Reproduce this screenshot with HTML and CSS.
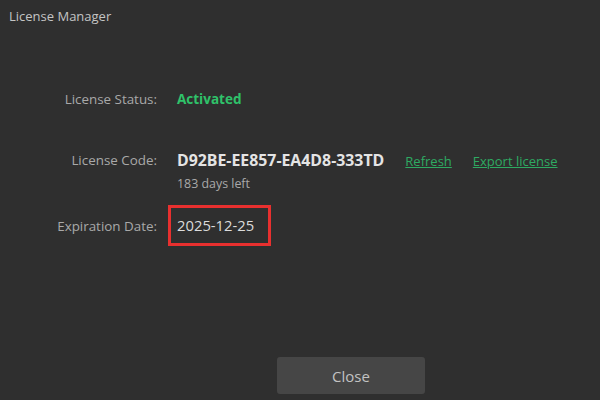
FILE: index.html
```html
<!DOCTYPE html>
<html>
<head>
<meta charset="utf-8">
<link rel="stylesheet" href="styles.css">
</head>
<body>
<div class="window">
  <div class="title">License Manager</div>
  <div class="form">
    <div class="row status-row">
      <div class="label">License Status:</div>
      <div class="value activated">Activated</div>
    </div>
    <div class="row code-row">
      <div class="label">License Code:</div>
      <div class="value">
        <div class="code-line">
          <span class="code">D92BE-EE857-EA4D8-333TD</span>
          <a class="link" href="#">Refresh</a>
          <a class="link" href="#">Export license</a>
        </div>
        <div class="days">183 days left</div>
      </div>
    </div>
    <div class="row exp-row">
      <div class="label">Expiration Date:</div>
      <div class="value"><span class="date-box">2025-12-25</span></div>
    </div>
  </div>
  <div class="footer">
    <button class="close-btn">Close</button>
  </div>
</div>
</body>
</html>
```
FILE: styles.css
```css
html, body {
  margin: 0;
  padding: 0;
  background: #2f2f2f;
}
.window {
  width: 600px;
  height: 400px;
  display: flex;
  flex-direction: column;
  font-family: "Open Sans", "Noto Sans", sans-serif;
  color: #e6e6e6;
  box-sizing: border-box;
}
.title {
  padding: 6px 0 0 9px;
  font-size: 13px;
  line-height: 20px;
  color: #c4c4c4;
}
.form {
  display: flex;
  flex-direction: column;
  margin-top: 63px;
}
.row {
  display: grid;
  grid-template-columns: 157px 1fr;
  column-gap: 20px;
  align-items: start;
}
.label {
  text-align: right;
  font-size: 13.4px;
  line-height: 20px;
  color: #a9a9a9;
}
.value {
  font-size: 13px;
  line-height: 20px;
}
.activated {
  color: #2fc26a;
  font-weight: 700;
  font-size: 13.5px;
}
.code-row {
  margin-top: 41px;
}
.code-line {
  display: flex;
  align-items: baseline;
  gap: 21px;
}
.code {
  font-weight: 700;
  font-size: 15.85px;
  color: #e4e4e4;
}
.link {
  color: #2eaa62;
  text-decoration: underline;
  font-size: 13px;
}
.days {
  margin-top: 3px;
  font-size: 12.4px;
  color: #a9a9a9;
}
.exp-row {
  margin-top: 11px;
  align-items: center;
}
.date-box {
  display: inline-flex;
  align-items: center;
  box-sizing: border-box;
  height: 41px;
  width: 103px;
  margin-left: -9px;
  padding: 0 0 1px 6px;
  border: 3px solid #e8302f;
  font-size: 14.8px;
  line-height: 20px;
  color: #dcdcdc;
}
.footer {
  margin-top: auto;
  display: flex;
  padding: 0 0 6px 277px;
}
.close-btn {
  width: 148px;
  height: 37px;
  border: none;
  border-radius: 3px;
  background: #464646;
  color: #c2c2c2;
  font-family: "Open Sans", "Noto Sans", sans-serif;
  font-size: 15px;
}
```
